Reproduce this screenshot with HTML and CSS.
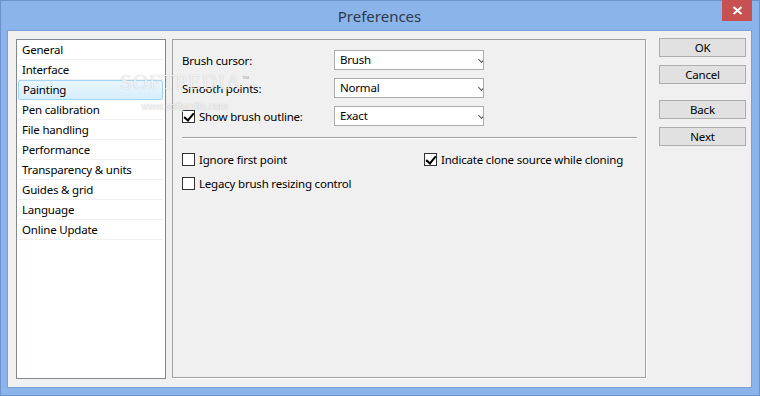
FILE: index.html
```html
<!DOCTYPE html>
<html lang="en">
<head>
    <meta charset="UTF-8">
    <title>Preferences</title>
    <link rel="stylesheet" href="styles.css">
</head>
<body>
    <div class="window">
        <div class="title-bar">
            <span class="title">Preferences</span>
            <div class="close-btn">
                <svg width="11" height="9" viewBox="0 0 11 9"><path d="M1.5 1 L9.5 8 M9.5 1 L1.5 8" stroke="#fff" stroke-width="2"/></svg>
            </div>
        </div>
        <div class="client">
            <ul class="page-list">
                <li>General</li>
                <li>Interface</li>
                <li class="selected">Painting</li>
                <li>Pen calibration</li>
                <li>File handling</li>
                <li>Performance</li>
                <li>Transparency &amp; units</li>
                <li>Guides &amp; grid</li>
                <li>Language</li>
                <li>Online Update</li>
            </ul>

            <div class="panel">
                <div class="form-row">
                    <span class="form-label">Brush cursor:</span>
                    <div class="combo">Brush<span class="combo-arrow"></span></div>
                </div>
                <div class="form-row">
                    <span class="form-label">Smooth points:</span>
                    <div class="combo">Normal<span class="combo-arrow"></span></div>
                </div>
                <div class="form-row">
                    <label class="form-label check-label"><span class="checkbox checked"></span>Show brush outline:</label>
                    <div class="combo">Exact<span class="combo-arrow"></span></div>
                </div>

                <div class="separator"></div>

                <div class="check-grid">
                    <label class="check-label"><span class="checkbox"></span>Ignore first point</label>
                    <label class="check-label"><span class="checkbox checked"></span>Indicate clone source while cloning</label>
                    <label class="check-label"><span class="checkbox"></span>Legacy brush resizing control</label>
                </div>
            </div>

            <div class="button-column">
                <button>OK</button>
                <button>Cancel</button>
                <button class="spaced">Back</button>
                <button>Next</button>
            </div>

            <div class="watermark">
                <div class="wm-big">SOFTPEDIA<sup>™</sup></div>
                <div class="wm-small">www.softpedia.com</div>
            </div>
        </div>
    </div>
</body>
</html>
```

FILE: styles.css
```css
* {
    box-sizing: border-box;
}
body {
    margin: 0;
    width: 760px;
    height: 396px;
    overflow: hidden;
    font-family: 'Noto Sans', 'Open Sans', sans-serif;
    font-size: 11.5px;
    letter-spacing: -0.2px;
    color: #000;
}
.window {
    width: 760px;
    height: 396px;
    background-color: #8bb4eb;
    border: 1px solid #6d93cf;
    display: flex;
    flex-direction: column;
    padding: 0 7px 7px 6px;
}
.title-bar {
    height: 29px;
    display: flex;
    justify-content: center;
    align-items: center;
    position: relative;
}
.title {
    font-size: 15px;
    letter-spacing: 0;
    color: #2e3a4a;
}
.close-btn {
    position: absolute;
    top: -1px;
    right: 0;
    width: 30px;
    height: 21px;
    background-color: #c75050;
    display: flex;
    justify-content: center;
    align-items: center;
}
.client {
    flex: 1;
    background-color: #f0f0f0;
    border: 1px solid #7a9fd6;
    display: flex;
    align-items: flex-start;
    padding: 7px 4px 0 8px;
    position: relative;
}

/* Left list of pages */
.page-list {
    flex-shrink: 0;
    list-style: none;
    margin: 1px 0 0;
    padding: 0 2px 0 1px;
    width: 150px;
    height: 340px;
    background-color: #fff;
    border: 1px solid #828790;
}
.page-list li {
    height: 20px;
    line-height: 19px;
    padding-left: 4px;
    border-bottom: 1px solid #f0f0f0;
    white-space: nowrap;
}
.page-list li.selected {
    background: linear-gradient(#eaf6fd, #d6eefc);
    border: 1px solid #a3d5f4;
    border-radius: 2px;
    line-height: 17px;
}

/* Middle panel */
.panel {
    flex-shrink: 0;
    width: 474px;
    height: 339px;
    margin: 1px 0 0 6px;
    border: 1px solid #a0a0a0;
    box-shadow: 1px 1px 0 #fff;
    padding: 10px 8px 0 9px;
}
.form-row {
    display: flex;
    align-items: center;
    height: 20px;
    margin-bottom: 8px;
}
.form-label {
    width: 152px;
}
.combo {
    width: 150px;
    height: 20px;
    line-height: 18px;
    background-color: #fff;
    border: 1px solid #acacac;
    padding-left: 5px;
    position: relative;
    overflow: hidden;
}
.combo-arrow {
    position: absolute;
    right: -1px;
    top: 6px;
    width: 5px;
    height: 5px;
    border-right: 1.5px solid #555;
    border-bottom: 1.5px solid #555;
    transform: rotate(45deg);
}
.check-label {
    display: flex;
    align-items: center;
    white-space: nowrap;
}
.checkbox {
    width: 13px;
    height: 13px;
    border: 1px solid #333;
    background-color: #fff;
    margin-right: 4px;
    position: relative;
    flex-shrink: 0;
}
.checkbox.checked::after {
    content: '';
    position: absolute;
    left: 3px;
    top: 0;
    width: 4px;
    height: 8px;
    border-right: 2px solid #000;
    border-bottom: 2px solid #000;
    transform: rotate(40deg);
}
.separator {
    height: 1px;
    background-color: #a0a0a0;
    box-shadow: 0 1px 0 #fff;
    margin: 11px 0 14px;
}
.check-grid {
    display: grid;
    grid-template-columns: 242px auto;
    row-gap: 10px;
}
.check-grid .check-label {
    height: 14px;
}

/* Right buttons */
.button-column {
    flex-shrink: 0;
    display: flex;
    flex-direction: column;
    margin-left: 13px;
}
.button-column button {
    width: 87px;
    height: 19px;
    margin-bottom: 8px;
    font-family: inherit;
    font-size: 11.5px;
    letter-spacing: inherit;
    color: #000;
    background-color: #e1e1e1;
    border: 1px solid #adadad;
    padding: 0;
    line-height: 16px;
}
.button-column button.spaced {
    margin-top: 8px;
}

/* Softpedia watermark over the list */
.watermark {
    position: absolute;
    left: 112px;
    top: 39px;
    pointer-events: none;
    text-align: center;
}
.wm-big {
    font-family: 'Liberation Serif', serif;
    font-size: 21px;
    letter-spacing: 1px;
    color: rgba(255, 255, 255, 0.8);
    text-shadow: 0 0 1px rgba(110, 110, 110, 0.45);
}
.wm-big sup {
    font-size: 7px;
    letter-spacing: 0;
    color: rgba(150, 150, 150, 0.5);
}
.wm-small {
    font-family: 'Liberation Sans', sans-serif;
    font-size: 10px;
    letter-spacing: 0;
    margin-top: 6px;
    color: rgba(255, 255, 255, 0.85);
    text-shadow: 0 0 1px rgba(110, 110, 110, 0.5);
}
```
